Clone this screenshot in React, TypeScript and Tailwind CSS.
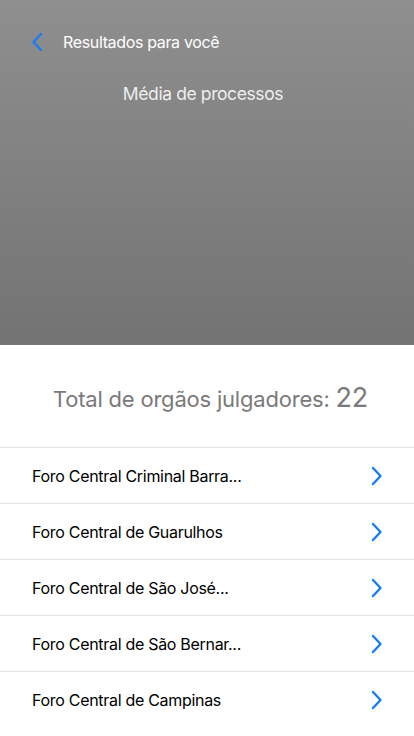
const Chevron = ({ left = false }: { left?: boolean }) => (
  <svg width="12" height="20" viewBox="0 0 12 20" fill="none" className="text-[#1a7cf5]">
    <polyline
      points={left ? '10,2 2.5,10 10,18' : '2,2 9.5,10 2,18'}
      stroke="currentColor"
      strokeWidth="2.4"
      strokeLinecap="round"
      strokeLinejoin="round"
    />
  </svg>
);

const App = () => {
  const foros = [
    'Foro Central Criminal Barra...',
    'Foro Central de Guarulhos',
    'Foro Central de São José...',
    'Foro Central de São Bernar...',
    'Foro Central de Campinas',
  ];

  return (
    <div className="w-[414px] h-[736px] overflow-hidden bg-white font-['Inter',sans-serif]">
      <div className="h-[345px] bg-gradient-to-b from-[#8f8f8f] to-[#737373]">
        <div className="flex items-center h-[84px] pl-[31px]">
          <Chevron left />
          <span className="ml-[20px] text-[16px] text-white tracking-[-0.35px]">Resultados para você</span>
        </div>
        <p className="text-center text-[17.5px] text-[#eeeeee] tracking-[-0.4px] -mt-[3px] pr-[8px]">Média de processos</p>
      </div>

      <div className="h-[102px] flex items-center justify-center pt-[4px] pl-[7px]">
        <span className="text-[22px] text-[#7a7a7a] tracking-[-0.2px]">
          Total de orgãos julgadores: <span className="text-[27px]">22</span>
        </span>
      </div>

      <ul className="border-t border-[#e3e3e3]">
        {foros.map((foro, index) => (
          <li
            key={index}
            className={`h-[56px] flex items-center justify-between pl-[32px] pr-[31px] ${index < foros.length - 1 ? 'border-b border-[#e3e3e3]' : ''}`}
          >
            <span className="text-[16px] text-black tracking-[-0.3px]">{foro}</span>
            <Chevron />
          </li>
        ))}
      </ul>
    </div>
  );
};

export default App;
